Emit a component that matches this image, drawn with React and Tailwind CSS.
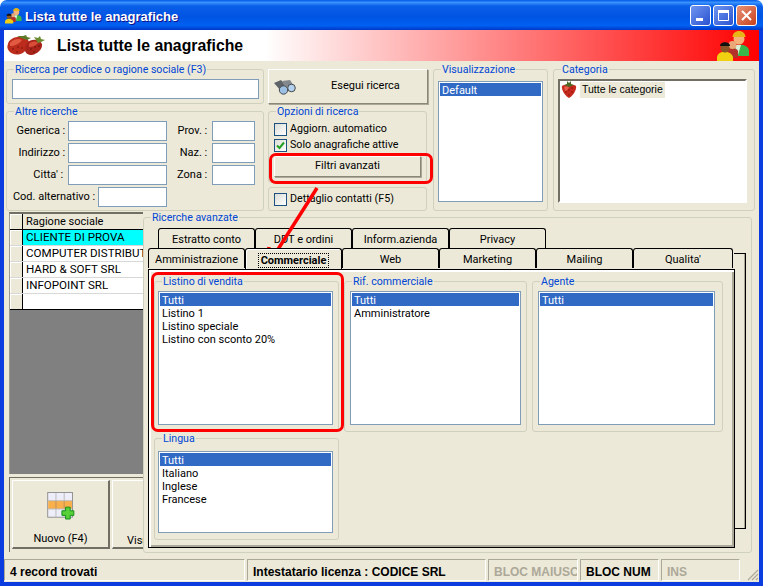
import React from 'react'

const GroupBox = ({ title, className = '', bodyClassName = '', children }) => (
  <fieldset className={`min-w-0 rounded-[3px] border border-[#d0d0bf] ${className}`}>
    {title && <legend className="ml-[7px] px-[1px] text-[10.6px] leading-[13px] text-[#0046d5]">{title}</legend>}
    <div className={bodyClassName}>{children}</div>
  </fieldset>
)

const TextBox = ({ className = '' }) => (
  <div className={`h-[20px] border border-[#7f9db9] bg-white ${className}`} />
)

const ListBox = ({ items, className = '' }) => (
  <div className={`border border-[#7f9db9] bg-white p-[1px] ${className}`}>
    {items.map((item, i) => (
      <div key={item} className={`h-[13px] pl-[2px] text-[11px] leading-[15px] ${i === 0 ? 'bg-[#316ac5] text-white' : 'text-black'}`}>{item}</div>
    ))}
  </div>
)

const RaisedButton = ({ className = '', children }) => (
  <div className={`flex items-center border border-t-white border-l-white border-r-[#8a8776] border-b-[#8a8776] bg-[#ece9d8] text-[11px] shadow-[1px_1px_0_#aca899] ${className}`}>
    {children}
  </div>
)

const CheckBox = ({ checked, label, className = '' }) => (
  <div className={`flex items-center gap-[3px] text-[10.7px] ${className}`}>
    <div className="flex h-[13px] w-[13px] items-center justify-center border border-[#1c5180] bg-gradient-to-br from-[#dcdcd7] to-white">
      {checked && (
        <svg width="9" height="9" viewBox="0 0 9 9"><path d="M1 4.5 L3.5 7 L8 1.5" fill="none" stroke="#21a121" strokeWidth="2" /></svg>
      )}
    </div>
    <span>{label}</span>
  </div>
)

const Strawberries = () => (
  <svg width="38" height="22" viewBox="0 0 38 22" className="shrink-0">
    <path d="M1 9 C2 3 12 0 19 3 C24 6 23 13 17 17 C12 21 5 20 2 16 C0 14 0 11 1 9 Z" fill="#bc2c1c" />
    <path d="M3 8 C6 4 12 3 15 5 C12 9 7 11 3 11 Z" fill="#e25a42" />
    <path d="M20 8 C24 3 33 4 35 9 C36 14 30 19 25 20 C21 20 18 18 18 15 C18 12 19 10 20 8 Z" fill="#a8241a" />
    <path d="M22 9 C25 6 29 6 31 8 C28 11 25 12 22 12 Z" fill="#d84c38" />
    <g fill="#6e1008">
      <circle cx="6" cy="14" r=".8" /><circle cx="11" cy="12" r=".8" /><circle cx="15" cy="13" r=".8" />
      <circle cx="10" cy="17" r=".8" /><circle cx="24" cy="14" r=".8" /><circle cx="28" cy="12" r=".8" />
      <circle cx="27" cy="17" r=".8" /><circle cx="32" cy="11" r=".8" />
    </g>
    <path d="M14 3 L10 1 L16 1 L19 0 L20 2 L24 3 L20 5 Z" fill="#5c7a2a" />
    <path d="M29 5 L27 2 L31 3 L33 1 L34 4 L38 5 L34 7 L31 8 Z" fill="#6a8c30" />
  </svg>
)

const SingleBerry = () => (
  <svg width="16" height="17" viewBox="0 0 16 17" className="shrink-0">
    <path d="M1 5 C3 3 13 3 15 5 C16 9 11 16 8 17 C5 16 0 9 1 5 Z" fill="#c62a1e" />
    <path d="M3 6 C5 5 7 5 8 6 C7 9 5 10 4 10 Z" fill="#e8604c" />
    <g fill="#7c1008">
      <circle cx="5" cy="11" r=".7" /><circle cx="8" cy="9" r=".7" /><circle cx="11" cy="7" r=".7" />
      <circle cx="11" cy="11" r=".7" /><circle cx="8" cy="14" r=".7" />
    </g>
    <path d="M3 4 L6 3 L6 0 L8 2 L10 0 L10 3 L13 4 L8 6 Z" fill="#4d6a25" />
  </svg>
)

const People = ({ size = 33 }) => (
  <svg width={size} height={size} viewBox="0 0 33 31" className="shrink-0">
    <path d="M13 20 C14 14 30 12 32 20 L32 26 L14 26 Z" fill="#39b54a" />
    <path d="M17 15 L21 25 L24 15 Z" fill="#d8f0d8" />
    <circle cx="22" cy="9" r="5.5" fill="#f5b27a" />
    <path d="M15.5 7 C16 -1 28 -1 28.5 7 Z" fill="#e8b418" />
    <path d="M10 21 C10 17 20 17 21 21 L21 28 L10 28 Z" fill="#b5322a" />
    <circle cx="15.5" cy="15" r="4" fill="#eaa878" />
    <path d="M0 27 C1 20 14 20 16 27 L16 31 L0 31 Z" fill="#f0d010" />
    <circle cx="8" cy="18" r="4.5" fill="#8a5424" />
    <path d="M3 16 C3 11 13 11 13 16 Z" fill="#111" />
  </svg>
)

const Binoculars = () => (
  <svg width="23" height="16" viewBox="0 0 23 16" className="shrink-0">
    <path d="M1 4 L8 1 L12 6 L8 12 Z" fill="#5f6468" />
    <path d="M9 2 L17 1 L21 7 L13 8 Z" fill="#83888c" />
    <circle cx="10.5" cy="11" r="4.2" fill="#9cc0e4" stroke="#44484c" />
    <circle cx="18.5" cy="9" r="3.8" fill="#b4d2ee" stroke="#44484c" />
  </svg>
)

const NewGridIcon = () => (
  <svg width="30" height="30" viewBox="0 0 30 30">
    <rect x="0.5" y="0.5" width="27" height="27" fill="#eeeefa" stroke="#8c8c8c" />
    <rect x="1" y="9.5" width="26" height="9" fill="#f9b04c" />
    <path d="M9.5 1V27M18.5 1V27M1 9.5H27M1 18.5H27" stroke="#b8b8b8" />
    <path d="M9.5 10V18M18.5 10V18" stroke="#d88a2a" />
    <path d="M20 16.5H25V20.5H29V25.5H25V29.5H20V25.5H16V20.5H20Z" fill="#58d038" stroke="#0a8a14" />
  </svg>
)

const WinButton = ({ className = '', children }) => (
  <div className={`flex h-[21px] w-[21px] items-center justify-center rounded-[3px] border border-white ${className}`}>
    <svg width="15" height="15" viewBox="0 0 15 15">{children}</svg>
  </div>
)

const StatusPanel = ({ className = '', children }) => (
  <div className={`flex items-center overflow-hidden whitespace-nowrap border border-b-white border-r-white border-l-[#aca899] border-t-[#aca899] pl-[5px] pt-[3px] ${className}`}>
    {children}
  </div>
)

const rows = ['CLIENTE DI PROVA', 'COMPUTER DISTRIBUTION', 'HARD & SOFT SRL', 'INFOPOINT SRL', '']
const backTabs = ['Estratto conto', 'DDT e ordini', 'Inform.azienda', 'Privacy']
const frontTabs = ['Amministrazione', 'Commerciale', 'Web', 'Marketing', 'Mailing', "Qualita'"]

const FieldRow = ({ label, labelClass, inputClass }) => (
  <div className="flex items-center">
    <span className={`whitespace-pre text-right text-[11px] ${labelClass}`}>{label}</span>
    <TextBox className={inputClass} />
  </div>
)

export default function App() {
  return (
    <div className="relative h-[586px] w-[763px] overflow-hidden bg-white text-black [font-family:Roboto,'Liberation_Sans',sans-serif]">
      <div className="flex h-[30px] items-center rounded-t-[7px] bg-[linear-gradient(180deg,#0058e6_0,#3a93ff_8%,#0a5fe8_20%,#0054e3_55%,#0060f2_85%,#0038c8_100%)] pl-[5px] pr-[6px] [font-family:'Liberation_Sans',sans-serif]">
        <People size={17} />
        <span className="ml-[3px] pt-[4px] text-[13px] font-bold text-white [text-shadow:1px_1px_0_#0f1089]">Lista tutte le anagrafiche</span>
        <div className="ml-auto flex gap-[2px]">
          <WinButton className="bg-[linear-gradient(135deg,#6f96f0,#2a52d0)]">
            <rect x="3" y="10" width="7" height="3" fill="#fff" />
          </WinButton>
          <WinButton className="bg-[linear-gradient(135deg,#6f96f0,#2a52d0)]">
            <path d="M2.5 2.5H12.5V12.5H2.5Z" fill="none" stroke="#fff" strokeWidth="1" />
            <rect x="2" y="2" width="11" height="3" fill="#fff" />
          </WinButton>
          <WinButton className="bg-[linear-gradient(135deg,#e89478,#c8401c)]">
            <path d="M3 3L12 12M12 3L3 12" stroke="#fff" strokeWidth="2" />
          </WinButton>
        </div>
      </div>

      <div className="flex h-[556px] flex-col border-x-4 border-b-[4px] border-[#0a3ce0] bg-[#ece9d8]">
        <div className="flex h-[31px] items-center justify-between bg-[linear-gradient(90deg,#fff_34.5%,#f00_100%)] pl-[3px] pr-[9px]">
          <div className="flex items-center">
            <Strawberries />
            <span className="ml-[12px] text-[15.8px] font-bold [font-family:'Liberation_Sans',sans-serif]">Lista tutte le anagrafiche</span>
          </div>
          <People size={33} />
        </div>

        <div className="flex gap-[4px] pl-[2px] pt-[2px]">
          <div className="flex w-[258px] flex-col gap-[1px]">
            <GroupBox title="Ricerca per codice o ragione sociale (F3)" className="h-[41px]" bodyClassName="px-[5px] pt-[3px]">
              <TextBox className="w-[247px]" />
            </GroupBox>
            <GroupBox title="Altre ricerche" className="h-[106px]" bodyClassName="flex pl-[5px] pt-[3px]">
              <div className="flex flex-col gap-[2px]">
                <FieldRow label="Generica : " labelClass="w-[56px]" inputClass="w-[99px]" />
                <FieldRow label="Indirizzo : " labelClass="w-[56px]" inputClass="w-[99px]" />
                <FieldRow label="Citta' : " labelClass="w-[56px] pr-[2px]" inputClass="w-[99px]" />
                <FieldRow label="Cod. alternativo : " labelClass="w-[86px]" inputClass="w-[69px]" />
              </div>
              <div className="ml-[8px] flex flex-col gap-[2px]">
                <FieldRow label="Prov. : " labelClass="w-[37px] pr-[2px]" inputClass="w-[43px]" />
                <FieldRow label="Naz. : " labelClass="w-[37px] pr-[2px]" inputClass="w-[43px]" />
                <FieldRow label="Zona : " labelClass="w-[37px] pr-[2px]" inputClass="w-[43px]" />
              </div>
            </GroupBox>
          </div>

          <div className="flex w-[160px] flex-col">
            <RaisedButton className="mt-[6px] h-[35px] w-[160px] pl-[4px]">
              <Binoculars />
              <span className="ml-[35px]">Esegui ricerca</span>
            </RaisedButton>
            <GroupBox title="Opzioni di ricerca" className="mt-[1px] h-[78px] w-[159px]" bodyClassName="pl-[5px] pt-[3px]">
              <CheckBox label="Aggiorn. automatico" className="h-[16px]" />
              <CheckBox checked label="Solo anagrafiche attive" className="h-[16px]" />
              <RaisedButton className="mt-[3px] h-[21px] w-[147px] justify-center">Filtri avanzati</RaisedButton>
            </GroupBox>
            <GroupBox className="mt-[4px] h-[24px] w-[159px]" bodyClassName="pl-[5px] pt-[3px]">
              <CheckBox label="Dettaglio contatti (F5)" />
            </GroupBox>
          </div>

          <GroupBox title="Visualizzazione" className="ml-[1px] h-[148px] w-[115px]" bodyClassName="px-[4px] pt-[5px]">
            <ListBox items={['Default']} className="h-[121px] w-[105px]" />
          </GroupBox>

          <GroupBox title="Categoria" className="ml-[1px] h-[148px] w-[202px]" bodyClassName="pl-[4px] pt-[3px]">
            <div className="h-[124px] w-[189px] border-2 border-b-white border-r-white border-t-[#716f64] border-l-[#716f64] bg-white pl-[1px]">
              <div className="flex items-center">
                <SingleBerry />
                <span className="ml-[3px] flex h-[16px] items-center bg-[#ece9d8] px-[2px] text-[10.5px] [font-family:'Liberation_Sans',sans-serif]">Tutte le categorie</span>
              </div>
            </div>
          </GroupBox>
        </div>

        <div className="flex flex-1 pl-[5px]">
          <div className="mt-[1px] flex h-[341px] w-[134px] flex-col overflow-hidden">
            <div className="h-[262px] border-l border-t-2 border-l-[#9a9a8c] border-t-[#716f64] bg-[#808080]">
              {['Ragione sociale', ...rows].map((row, i) => (
                <div key={i} className={`flex h-[16px] border-b ${i === 0 || i === 5 ? 'border-b-black' : 'border-b-[#d8d8d8]'}`}>
                  <div className="w-[13px] shrink-0 border-r border-r-black bg-[#ece9d8] shadow-[inset_1px_1px_0_#fff]" />
                  <div className={`flex-1 overflow-hidden whitespace-nowrap pl-[3px] leading-[15px] ${i === 0 ? 'bg-[#ece9d8] text-[11px]' : i === 1 ? 'bg-[#00ffff] text-[11.6px]' : 'bg-white text-[11.6px]'}`}>{row}</div>
                </div>
              ))}
            </div>
            <div className="mt-[3px] flex h-[75px] gap-[2px] border-l border-t border-[#716f64] pl-[2px] pt-[2px]">
              <div className="flex h-[69px] w-[98px] shrink-0 flex-col items-center border border-b-2 border-r-2 border-l-white border-t-white border-b-[#716f64] border-r-[#716f64] bg-[#ece9d8] pt-[11px] text-[11px]">
                <NewGridIcon />
                <span className="mt-[11px]">Nuovo (F4)</span>
              </div>
              <div className="h-[69px] w-[98px] shrink-0 border border-b-2 border-l-white border-t-white border-b-[#716f64] border-r-[#716f64] bg-[#ece9d8] pl-[14px] pt-[52px] text-[11px]">
                Visualizza
              </div>
            </div>
          </div>

          <GroupBox title="Ricerche avanzate" className="relative h-[342px] w-[609px]">
            <div className="relative ml-[4px] mt-[4px] w-[598px]">
              <div className="absolute bottom-[19px] right-[0px] top-[25px] w-[12px] border-b border-r border-t border-black shadow-[inset_-1px_0_0_#aca899]" />
              <div className="flex pl-[10px]">
                {backTabs.map((tab) => (
                  <div key={tab} className="flex h-[20px] w-[97px] items-center justify-center rounded-t-[3px] border-x border-t border-black pt-[3px] text-[11px]">{tab}</div>
                ))}
              </div>
              <div className="relative flex">
                {frontTabs.map((tab) => (
                  <div key={tab} className={tab === 'Commerciale'
                    ? 'z-10 flex h-[21px] w-[97px] items-center justify-center rounded-t-[3px] border-x border-t border-black bg-[#ece9d8] pt-[2px] text-[11px] font-bold shadow-[inset_1px_1px_0_#fff]'
                    : tab === "Qualita'"
                      ? 'flex h-[20px] w-[100px] items-center justify-center rounded-t-[3px] border-x border-t border-black pt-[3px] text-[11px]'
                      : 'flex h-[20px] w-[97px] items-center justify-center rounded-t-[3px] border-x border-t border-black pt-[3px] text-[11px]'}>
                    {tab === 'Commerciale' ? <span className="border border-dotted border-black px-[2px] leading-[13px]">{tab}</span> : tab}
                  </div>
                ))}
              </div>
              <div className="relative h-[279px] w-[587px] border border-black bg-[#ece9d8] pl-[5px] pt-[5px] shadow-[inset_2px_2px_0_#fff,inset_-2px_-2px_0_#aca899]">
                <div className="flex gap-[5px]">
                  <GroupBox title="Listino di vendita" className="h-[157px] w-[185px]" bodyClassName="pl-[3px] pt-[3px]">
                    <ListBox items={['Tutti', 'Listino 1', 'Listino speciale', 'Listino con sconto 20%']} className="h-[134px] w-[175px]" />
                  </GroupBox>
                  <GroupBox title="Rif. commerciale" className="h-[157px] w-[183px]" bodyClassName="pl-[5px] pt-[3px]">
                    <ListBox items={['Tutti', 'Amministratore']} className="h-[134px] w-[171px]" />
                  </GroupBox>
                  <GroupBox title="Agente" className="h-[157px] w-[191px]" bodyClassName="pl-[5px] pt-[3px]">
                    <ListBox items={['Tutti']} className="h-[134px] w-[177px]" />
                  </GroupBox>
                </div>
                <GroupBox title="Lingua" className="h-[108px] w-[185px]" bodyClassName="pl-[3px] pt-[6px]">
                  <ListBox items={['Tutti', 'Italiano', 'Inglese', 'Francese']} className="h-[82px] w-[175px]" />
                </GroupBox>
              </div>
            </div>
          </GroupBox>
        </div>

        <div className="flex h-[24px] items-stretch gap-[2px] pb-[1px] pt-[1px] text-[12px] font-bold [font-family:'Liberation_Sans',sans-serif]">
          <StatusPanel className="w-[241px]">4 record trovati</StatusPanel>
          <StatusPanel className="w-[239px]">Intestatario licenza : CODICE SRL</StatusPanel>
          <StatusPanel className="w-[90px] text-[#aca899]">BLOC MAIUSC</StatusPanel>
          <StatusPanel className="w-[79px]">BLOC NUM</StatusPanel>
          <StatusPanel className="w-[79px] text-[#aca899]">INS</StatusPanel>
          <svg width="14" height="14" viewBox="0 0 14 14" className="ml-auto self-end">
            <path d="M13 3L3 13M13 7L7 13M13 11L11 13" stroke="#aca899" strokeWidth="1.2" />
          </svg>
        </div>
      </div>

      {/* annotazioni rosse sopra lo screenshot */}
      <div className="absolute left-[269px] top-[153px] h-[31px] w-[164px] rounded-[7px] border-[3px] border-[#f00]" />
      <div className="absolute left-[151px] top-[272px] h-[160px] w-[193px] rounded-[7px] border-[3px] border-[#f00]" />
      <svg width="70" height="90" viewBox="0 0 70 90" className="absolute left-[255px] top-[185px]">
        <path d="M62 3 L13 80" stroke="#f00" strokeWidth="3.5" fill="none" />
        <path d="M14 62 L12 81 L32 70" stroke="#f00" strokeWidth="3.5" fill="none" />
      </svg>
    </div>
  )
}
